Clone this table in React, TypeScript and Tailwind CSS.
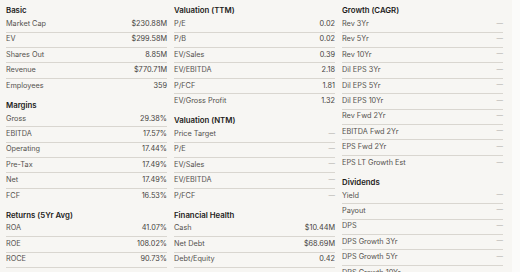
type Row = [string, string]
type Section = { title: string; rows: Row[]; trailingLine?: boolean }

const D = '—'

const columns: Section[][] = [
  [
    {
      title: 'Basic',
      rows: [
        ['Market Cap', '$230.88M'],
        ['EV', '$299.58M'],
        ['Shares Out', '8.85M'],
        ['Revenue', '$770.71M'],
        ['Employees', '359'],
      ],
    },
    {
      title: 'Margins',
      rows: [
        ['Gross', '29.38%'],
        ['EBITDA', '17.57%'],
        ['Operating', '17.44%'],
        ['Pre-Tax', '17.49%'],
        ['Net', '17.49%'],
        ['FCF', '16.53%'],
      ],
    },
    {
      title: 'Returns (5Yr Avg)',
      trailingLine: true,
      rows: [
        ['ROA', '41.07%'],
        ['ROE', '108.02%'],
        ['ROCE', '90.73%'],
      ],
    },
  ],
  [
    {
      title: 'Valuation (TTM)',
      rows: [
        ['P/E', '0.02'],
        ['P/B', '0.02'],
        ['EV/Sales', '0.39'],
        ['EV/EBITDA', '2.18'],
        ['P/FCF', '1.81'],
        ['EV/Gross Profit', '1.32'],
      ],
    },
    {
      title: 'Valuation (NTM)',
      rows: [
        ['Price Target', D],
        ['P/E', D],
        ['EV/Sales', D],
        ['EV/EBITDA', D],
        ['P/FCF', D],
      ],
    },
    {
      title: 'Financial Health',
      trailingLine: true,
      rows: [
        ['Cash', '$10.44M'],
        ['Net Debt', '$68.69M'],
        ['Debt/Equity', '0.42'],
      ],
    },
  ],
  [
    {
      title: 'Growth (CAGR)',
      rows: [
        ['Rev 3Yr', D],
        ['Rev 5Yr', D],
        ['Rev 10Yr', D],
        ['Dil EPS 3Yr', D],
        ['Dil EPS 5Yr', D],
        ['Dil EPS 10Yr', D],
        ['Rev Fwd 2Yr', D],
        ['EBITDA Fwd 2Yr', D],
        ['EPS Fwd 2Yr', D],
        ['EPS LT Growth Est', D],
      ],
    },
    {
      title: 'Dividends',
      rows: [
        ['Yield', D],
        ['Payout', D],
        ['DPS', D],
        ['DPS Growth 3Yr', D],
        ['DPS Growth 5Yr', D],
        ['DPS Growth 10Yr', D],
      ],
    },
  ],
]

function StatSection({ section }: { section: Section }) {
  return (
    <div className="mt-[5px] first:mt-0">
      <div className="h-[12.6px] flex items-center text-[7.8px] font-semibold text-[#1c1b1a]">
        {section.title}
      </div>
      {section.rows.map(([label, value], i) => (
        <div
          key={label + i}
          className={`h-[15.4px] flex items-center justify-between text-[7.3px] ${
            i < section.rows.length - 1 || section.trailingLine ? 'border-b border-[#d9d6d0]' : ''
          }`}
        >
          <span className="text-[#55524e]">{label}</span>
          <span className={value === D ? 'text-[#b0ada8] text-[6.5px]' : 'text-[#45423e]'}>{value}</span>
        </div>
      ))}
    </div>
  )
}

export default function App() {
  return (
    <div
      className="w-[520px] h-[272px] overflow-hidden bg-[#fbfbfa] flex"
      style={{ fontFamily: 'Inter, "Noto Sans", sans-serif' }}
    >
      <div className="w-[512px] h-full bg-[#f7f6f3] pl-[6px] pr-[9px] pt-[4.7px] grid grid-cols-3 gap-x-[7px] items-start">
        {columns.map((col, ci) => (
          <div key={ci} className="flex flex-col">
            {col.map((s) => (
              <StatSection key={s.title} section={s} />
            ))}
          </div>
        ))}
      </div>
    </div>
  )
}
